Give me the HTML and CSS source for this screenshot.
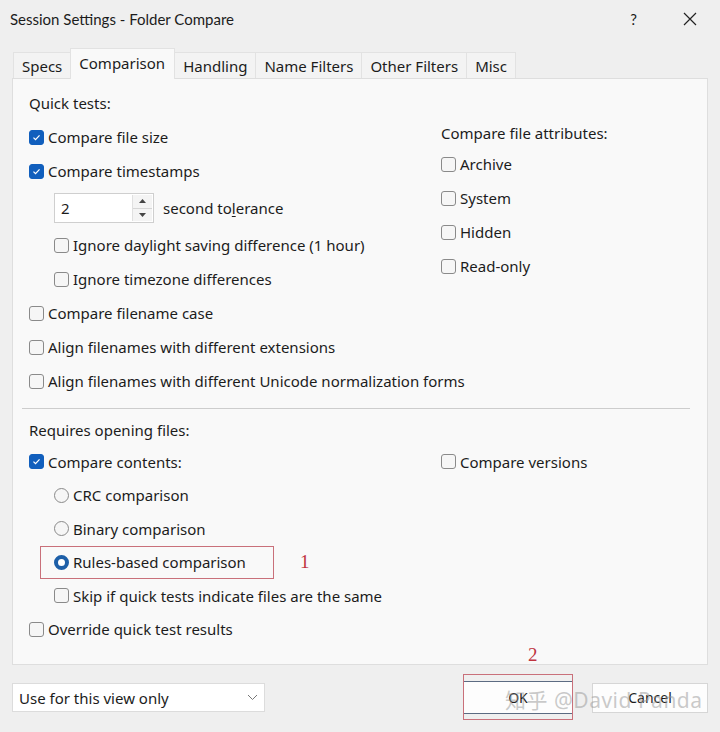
FILE: index.html
```html
<!DOCTYPE html>
<html>
<head>
<meta charset="utf-8">
<link rel="stylesheet" href="styles.css">
</head>
<body>
<div class="dialog">
  <div class="titlebar">
    <span class="title">Session Settings - Folder Compare</span>
    <span class="help">?</span>
    <svg class="close" width="14" height="14" viewBox="0 0 14 14"><path d="M1 1 L13 13 M13 1 L1 13" stroke="#222" stroke-width="1.2" fill="none"/></svg>
  </div>

  <div class="tabs">
    <div class="tab">Specs</div>
    <div class="tab active">Comparison</div>
    <div class="tab">Handling</div>
    <div class="tab">Name Filters</div>
    <div class="tab">Other Filters</div>
    <div class="tab">Misc</div>
  </div>

  <div class="panel">
    <div class="top">
      <div class="col">
        <div class="row label">Quick tests:</div>
        <div class="row"><span class="cb on"><svg viewBox="0 0 15 15"><path d="M4 7.6 L6.4 10 L11 5" stroke="#fff" stroke-width="1.4" fill="none"/></svg></span>Compare file size</div>
        <div class="row"><span class="cb on"><svg viewBox="0 0 15 15"><path d="M4 7.6 L6.4 10 L11 5" stroke="#fff" stroke-width="1.4" fill="none"/></svg></span>Compare timestamps</div>
        <div class="row spin-row indent">
          <div class="spin">
            <span class="spin-val">2</span>
            <div class="spin-btns">
              <span class="arr"><svg width="7" height="4" viewBox="0 0 7 4"><path d="M0 4 L3.5 0 L7 4 Z" fill="#444"/></svg></span>
              <span class="arr"><svg width="7" height="4" viewBox="0 0 7 4"><path d="M0 0 L3.5 4 L7 0 Z" fill="#444"/></svg></span>
            </div>
          </div>
          <span class="spin-label">second to<u>l</u>erance</span>
        </div>
        <div class="row indent"><span class="cb"></span>Ignore daylight saving difference (1 hour)</div>
        <div class="row indent"><span class="cb"></span>Ignore timezone differences</div>
        <div class="row"><span class="cb"></span>Compare filename case</div>
        <div class="row"><span class="cb"></span>Align filenames with different extensions</div>
        <div class="row"><span class="cb"></span>Align filenames with different Unicode normalization forms</div>
      </div>
      <div class="col right">
        <div class="row head">Compare file attributes:</div>
        <div class="row"><span class="cb"></span>Archive</div>
        <div class="row"><span class="cb"></span>System</div>
        <div class="row"><span class="cb"></span>Hidden</div>
        <div class="row"><span class="cb"></span>Read-only</div>
      </div>
    </div>

    <div class="sep"></div>

    <div class="bottom">
      <div class="row req">Requires opening files:</div>
      <div class="brow split">
        <div class="half"><span class="cb on"><svg viewBox="0 0 15 15"><path d="M4 7.6 L6.4 10 L11 5" stroke="#fff" stroke-width="1.4" fill="none"/></svg></span>Compare contents:</div>
        <div class="half2"><span class="cb"></span>Compare versions</div>
      </div>
      <div class="brow indent"><span class="rb"></span>CRC comparison</div>
      <div class="brow indent"><span class="rb"></span>Binary comparison</div>
      <div class="brow">
        <div class="annot-box"><span class="rb on"></span>Rules-based comparison</div>
        <span class="annot-num">1</span>
      </div>
      <div class="brow indent"><span class="cb"></span>Skip if quick tests indicate files are the same</div>
      <div class="brow"><span class="cb"></span>Override quick test results</div>
    </div>
  </div>

  <div class="footer">
    <div class="select">
      <span>Use for this view only</span>
      <svg width="11" height="7" viewBox="0 0 11 7"><path d="M1 1 L5.5 5.5 L10 1" stroke="#777" stroke-width="1" fill="none"/></svg>
    </div>
    <div class="buttons">
      <div class="btn ok">OK<span class="annot-num two">2</span></div>
      <div class="btn cancel">Cancel</div>
    </div>
    <div class="watermark">知乎 @David Panda</div>
  </div>
</div>
</body>
</html>
```

FILE: styles.css
```css
html, body {
  margin: 0;
  padding: 0;
}
body {
  width: 720px;
  height: 732px;
  overflow: hidden;
  background: #efefef;
  font-family: "Noto Sans", "Noto Sans CJK SC", sans-serif;
  font-size: 15px;
  color: #1c1c1c;
}
.dialog {
  position: relative;
  height: 732px;
}

/* title bar */
.titlebar {
  height: 38px;
  display: flex;
  align-items: center;
  padding-left: 10px;
  font-family: Lato, "Noto Sans", sans-serif;
}
.title {
  flex: 1;
}
.help {
  font-size: 15px;
  margin-right: 46px;
}
.close {
  margin-right: 23px;
}

/* tabs */
.tabs {
  height: 40px;
  display: flex;
  align-items: flex-end;
  padding-left: 13px;
}
.tab {
  box-sizing: border-box;
  height: 26px;
  padding: 0 8px;
  display: flex;
  align-items: center;
  background: #f3f3f3;
  border: 1px solid #e2e2e2;
  border-bottom: none;
  margin-right: -1px;
}
.tab.active {
  height: 31px;
  margin-bottom: -1px;
  background: #f9f9f9;
  position: relative;
  z-index: 1;
  padding: 0 9px 3px 8px;
}

/* panel */
.panel {
  box-sizing: border-box;
  margin: 0 12px;
  height: 587px;
  border: 1px solid #dedede;
  background: #f9f9f9;
  padding: 7px 0 0 16px;
}
.top {
  display: grid;
  grid-template-columns: 412px 1fr;
}
.row {
  display: flex;
  align-items: center;
  height: 34px;
  gap: 4px;
  white-space: nowrap;
}
.indent {
  padding-left: 25px;
}
.right {
  padding-top: 33px;
}
.right .head {
  height: 28px;
}

.cb {
  box-sizing: border-box;
  width: 15px;
  height: 15px;
  border: 1px solid #8a8a8a;
  border-radius: 3px;
  background: #f6f6f6;
  flex: none;
  display: flex;
}
.cb.on {
  background: #115fbd;
  border-color: #115fbd;
}
.cb svg {
  width: 13px;
  height: 13px;
}
.rb {
  box-sizing: border-box;
  width: 15px;
  height: 15px;
  border: 1px solid #8a8a8a;
  border-radius: 50%;
  background: #f6f6f6;
  flex: none;
}
.rb.on {
  border: 4px solid #1d5fa8;
  background: #fff;
}

/* spin box */
.spin-row {
  height: 40px;
  gap: 9px;
}
.spin {
  box-sizing: border-box;
  width: 100px;
  height: 30px;
  border: 1px solid #cfcfcf;
  background: #fff;
  display: flex;
  align-items: center;
}
.spin-val {
  flex: 1;
  padding-left: 6px;
}
.spin-btns {
  width: 19px;
  height: 26px;
  margin-right: 1px;
  border-left: 1px solid #e0e0e0;
  display: flex;
  flex-direction: column;
  background: #f4f4f4;
}
.arr {
  flex: 1;
  display: flex;
  align-items: center;
  justify-content: center;
}
.arr + .arr {
  border-top: 1px solid #d6d6d6;
}
.spin-label u {
  text-decoration-thickness: 1px;
  text-underline-offset: 2px;
}

/* separator */
.sep {
  height: 1px;
  background: #cdcdcd;
  margin: 10px 17px 0 -7px;
}

/* bottom section */
.req {
  height: 30px;
  margin-top: 6px;
}
.brow {
  display: flex;
  align-items: center;
  height: 33.5px;
  gap: 4px;
  white-space: nowrap;
}
.split {
  gap: 0;
}
.half, .half2 {
  display: flex;
  align-items: center;
  gap: 4px;
}
.half {
  width: 412px;
}
.annot-box {
  box-sizing: border-box;
  display: flex;
  align-items: center;
  gap: 4px;
  margin-left: 11px;
  width: 234px;
  height: 33px;
  padding-left: 13px;
  border: 1px solid #c9707a;
}
.annot-num {
  font-family: "Liberation Serif", serif;
  color: #c0333f;
  font-size: 19px;
  margin-left: 22px;
}

/* footer */
.footer {
  display: flex;
  align-items: center;
  padding: 16px 12px 0;
}
.select {
  box-sizing: border-box;
  width: 253px;
  height: 29px;
  background: #fff;
  border: 1px solid #dcdcdc;
  display: flex;
  align-items: center;
  justify-content: space-between;
  padding: 0 6px 0 6px;
}
.buttons {
  margin-left: auto;
  display: flex;
  align-items: center;
  gap: 19px;
}
.btn {
  box-sizing: border-box;
  height: 31px;
  display: flex;
  align-items: center;
  justify-content: center;
  background: #fdfdfd;
  border: 1px solid #d6d6d6;
  font-size: 14px;
}
.ok {
  position: relative;
  width: 110px;
  height: 33px;
  border: 1px solid #5c6b82;
}
.ok::after {
  content: "";
  position: absolute;
  left: -1px;
  right: -1px;
  top: -8px;
  bottom: -7px;
  border: 1px solid #c9707a;
}
.annot-num.two {
  position: absolute;
  top: -38px;
  left: 64px;
  margin: 0;
}
.cancel {
  width: 116px;
  height: 30px;
}
.watermark {
  position: absolute;
  left: 505px;
  top: 684px;
  font-size: 21px;
  color: rgba(150, 150, 150, 0.5);
  font-family: "Noto Sans", "Noto Sans CJK SC", sans-serif;
  letter-spacing: 0.5px;
  pointer-events: none;
}
```
